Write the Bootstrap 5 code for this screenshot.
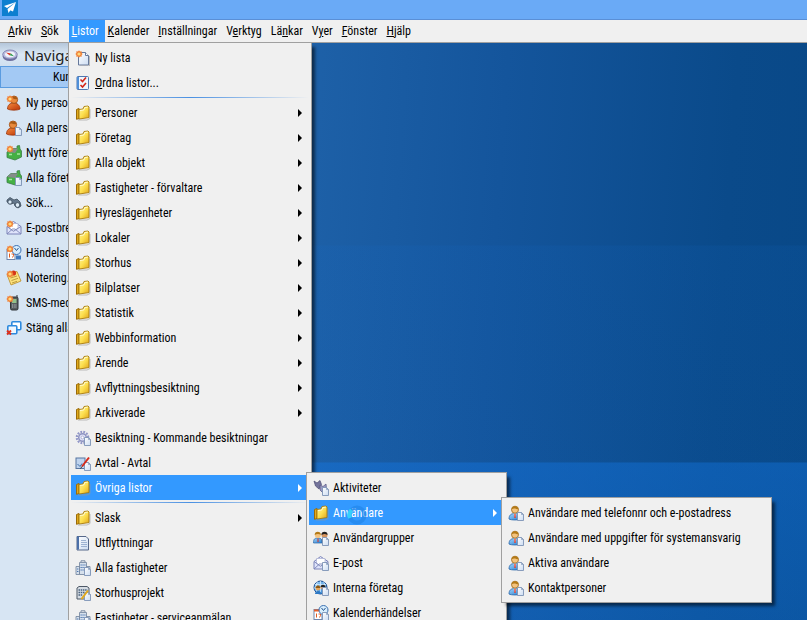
<!DOCTYPE html>
<html lang="sv">
<head>
<meta charset="utf-8">
<meta name="viewport" content="width=device-width, initial-scale=1">
<title>Listor</title>
<link href="https://cdn.jsdelivr.net/npm/bootstrap@5.3.0/dist/css/bootstrap.min.css" rel="stylesheet">
<style>
  body { font-family: "Roboto Condensed", Roboto, "Liberation Sans", sans-serif; font-size: 12px; line-height: 16px; color: #000; }
  .defs { position: absolute; width: 0; height: 0; }
  .ico { width: 16px; height: 16px; flex: none; }
  .title-strip { background: #6aaaf6; height: 20px; border-bottom: 1px solid #5a8fd6; padding-left: 2px; }
  .menu-strip { background: #f0f0f0; height: 23px; border-bottom: 1px solid #a0a0a0; padding-left: 5px; }
  .menu-strip .nav-link { color: #000; padding: 3px 6px 3px 3px; }
  .menu-strip .nav-link.active { background: #3399ff; color: #fff; }
  .side { width: 170px; background: #d7e5f3; }
  .side-head { height: 23px; font: 15px/24px "Noto Sans", sans-serif; color: #1e1e1e; background: linear-gradient(#b4c6da, #dbe8f5 50%, #cfdff0); padding-left: 2px; gap: 6px; }
  .side-tab { height: 22px; border: 1px solid #5a9be0; background: #a3c9f4; color: #000; padding: 2px 0 2px 52px; }
  .side-list { padding-top: 2px; }
  .side-link { height: 25px; color: #000; gap: 4px; padding-left: 6px; }
  .desk {
    background:
      linear-gradient(transparent 35%, rgba(20,110,210,.1) 35.2%, rgba(20,110,210,.06) 72.6%, rgba(20,120,230,.42) 72.8%, rgba(20,120,230,.3) 100%),
      linear-gradient(94deg, #1e61a8 20%, #14559c 50%, #0a4a8a 84%, #084887);
  }
  .pop { position: absolute; z-index: 5; background: #f0f0f0; border: 1px solid #a0a0a0; padding: 2px; box-shadow: 4px 4px 3px -1px rgba(0,0,0,.55); }
  .pop-main { top: 42px; left: 68px; width: 244px; }
  .pop-lists { top: -3px; left: calc(100% - 3px); width: 201px; }
  .pop-users { top: -3px; left: calc(100% - 3px); width: 271px; }
  .entry { height: 25px; width: 100%; color: #000; padding: 0 7px 0 4px; gap: 4px; border: 0; background: none; text-align: left; white-space: nowrap; }
  .entry.on { background: #3399ff; color: #fff; }
  .sub::after { content: ""; margin-left: auto; border: 4px solid transparent; border-left-color: currentColor; border-right: 0; }
  .rule { height: 5px; padding-top: 2px; }
  .rule hr { margin: 0; border: 0; height: 1px; opacity: 1; background: linear-gradient(90deg, #f0f0f0, #4a90e2 50%, #f0f0f0); }
  .busy { position: absolute; left: 38px; top: 5px; width: 20px; height: 20px; }
</style>
<script src="https://cdn.jsdelivr.net/npm/bootstrap@5.3.0/dist/js/bootstrap.bundle.min.js"></script>
</head>
<body class="vh-100 overflow-hidden d-flex flex-column position-relative">
<svg class="defs" aria-hidden="true">
  <defs>
    <linearGradient id="gold" x2="1" y2="1"><stop stop-color="#fff3a0"/><stop offset=".5" stop-color="#fde050"/><stop offset="1" stop-color="#e0a418"/></linearGradient>
    <linearGradient id="sheet" x2="1" y2="1"><stop stop-color="#fff"/><stop offset="1" stop-color="#ccdcf2"/></linearGradient>
    <linearGradient id="blue" x2="1" y2="1"><stop stop-color="#9fd4fb"/><stop offset="1" stop-color="#2a7fd0"/></linearGradient>
    <linearGradient id="rust" x2="1" y2="1"><stop stop-color="#f58a3c"/><stop offset="1" stop-color="#b93408"/></linearGradient>
    <symbol id="star" viewBox="0 0 16 16"><circle cx="4" cy="4" r="3" fill="#f28a3c"/><path d="M4 .5v7M.5 4h7M1.500 1.500l5 5M6.500 1.500l-5 5" stroke="#ef7a35" stroke-width=".8"/><circle cx="4" cy="4" r="1.600" fill="#ffd87a"/></symbol>
    <symbol id="page" viewBox="0 0 16 16"><path d="M9.500 7.500h4l2 2v6h-6z" fill="url(#sheet)" stroke="#7d93b5" stroke-width=".9"/><path d="M13.500 7.500v2h2" fill="none" stroke="#7d93b5" stroke-width=".7"/></symbol>
    <symbol id="folder" viewBox="0 0 16 16"><path d="M3 15h9l3-1.500V4" fill="none" stroke="#999" opacity=".6"/><path d="M1.500 4.500L4 3.500v10l-2.500.8z" fill="#e2a91c" stroke="#9a6b08"/><path d="M4 4.500l4-.5 1-2.500 4-.5 1 1v10.600L4 14z" fill="url(#gold)" stroke="#a87a0c" stroke-width=".9"/><path d="M5 5.500l3.800-.5 1-2.500 3-.4" fill="none" stroke="#fffbd0"/></symbol>
    <symbol id="new" viewBox="0 0 16 16"><path d="M3.500 2.500h7l3 3v9.500h-10z" fill="url(#sheet)" stroke="#66789a"/><path d="M10.500 2.500v3h3" fill="#fff" stroke="#66789a"/><path d="M14.500 6v10H5" fill="none" stroke="#999" opacity=".6"/><use href="#star"/></symbol>
    <symbol id="check" viewBox="0 0 16 16"><rect x="2" y="1.500" width="11.500" height="13" rx="1" fill="#eef5fd" stroke="#4f77b0"/><path d="M3 2v12" stroke="#4f8fd8" stroke-width="2"/><path d="M5.500 4.500l2 2 3.500-4M5.500 10l2 2L11 8" fill="none" stroke="#d32618" stroke-width="1.600"/></symbol>
    <symbol id="person" viewBox="0 0 16 16"><path d="M1.500 14c0-4 2.500-6 6-6s6.500 2 6.500 6c-2 1.500-10 1.500-12.500 0z" fill="url(#rust)" stroke="#9c3208" stroke-width=".8"/><circle cx="8" cy="4.700" r="3.700" fill="#e98a3d" stroke="#9c4a10" stroke-width=".8"/><path d="M5 3.500c1-3 6-2.500 6.300.8-2-.2-4 0-6.300-.8z" fill="#a85b15"/></symbol>
    <symbol id="nperson" viewBox="0 0 16 16"><use href="#person"/><use href="#star"/></symbol>
    <symbol id="aperson" viewBox="0 0 16 16"><use href="#person" x="-1"/><use href="#page"/></symbol>
    <symbol id="house" viewBox="0 0 16 16"><path d="M1 7l4-3.500h6V1l2.500-.5L14 4l1.500 2v6L9 15l-8-2.500z" fill="#45b044" stroke="#3b7e45" stroke-width=".8"/><path d="M1 7l4-3.500h7L9 8z" fill="#858c8a"/><path d="M3 9.500h3M11 9h3" stroke="#a5e5a0" stroke-width="1.500"/></symbol>
    <symbol id="nhouse" viewBox="0 0 16 16"><use href="#house"/><use href="#star"/></symbol>
    <symbol id="ahouse" viewBox="0 0 16 16"><use href="#house"/><use href="#page"/></symbol>
    <symbol id="bino" viewBox="0 0 16 16"><path d="M1 5l3-2.500L8 5l3-1 3 3 1 4-3 2-3-2-1-3-3 1-4-2z" fill="#66798d" stroke="#3e4c5c" stroke-width=".8"/><circle cx="4" cy="7" r="2.200" fill="#dcebf6" stroke="#405062"/><circle cx="11.500" cy="10" r="2.400" fill="#dcebf6" stroke="#405062"/></symbol>
    <symbol id="mail" viewBox="0 0 16 16"><path d="M1 6.500l6.500-5L15 6.500V14H1z" fill="#dfe4fb" stroke="#7c84b8"/><path d="M3.500 3.500h8.500v5l-4.500 3-4-3z" fill="#fff" stroke="#a8aed0" stroke-width=".7"/><path d="M1 14l5.500-5h2.500l6 5M1 6.500L7.500 11 15 6.500" fill="none" stroke="#7c84b8" stroke-width=".9"/></symbol>
    <symbol id="nmail" viewBox="0 0 16 16"><use href="#mail"/><use href="#star"/></symbol>
    <symbol id="amail" viewBox="0 0 16 16"><use href="#mail"/><use href="#page"/></symbol>
    <symbol id="cal" viewBox="0 0 16 16"><rect x="1" y="4.500" width="8" height="10" fill="#fff" stroke="#6f86ad"/><path d="M1 5.500h8" stroke="#e6602a" stroke-width="2"/><path d="M3.500 8.500v4M5.500 9h2v1.500l-1 2" fill="none" stroke="#e05b20"/><circle cx="10.500" cy="5" r="4.500" fill="#d7edfc" stroke="#3a6fb0"/><path d="M8.500 3l2 2.500 2-2.500" fill="none" stroke="#28558e"/><path d="M10 10.500h5v4h-5z" fill="#3c78be"/></symbol>
    <symbol id="ncal" viewBox="0 0 16 16"><use href="#cal"/><use href="#star"/></symbol>
    <symbol id="acal" viewBox="0 0 16 16"><use href="#cal"/><use href="#page"/></symbol>
    <symbol id="note" viewBox="0 0 16 16"><path d="M1 4.500l10-3L15 11 5 15z" fill="#fbe17c" stroke="#ba8a26" stroke-width=".8"/><path d="M4.500 8l6.500-2M5.500 10.500L12 8.300M6 13l5-1.700" stroke="#b08a2c" stroke-width=".8"/><circle cx="7.500" cy="3" r="2.600" fill="#d63417"/></symbol>
    <symbol id="nnote" viewBox="0 0 16 16"><use href="#note"/><use href="#star"/></symbol>
    <symbol id="phone" viewBox="0 0 16 16"><path d="M11 3V0" stroke="#333"/><rect x="4.500" y="2" width="7.500" height="13" rx="1.500" fill="#555b5e" stroke="#2e3336"/><rect x="6" y="4" width="4.500" height="4" fill="#90c08a"/><path d="M6 10h4.500M6 12h4.500" stroke="#b9c0c4" stroke-dasharray="1 .7"/><use href="#star"/></symbol>
    <symbol id="close" viewBox="0 0 16 16"><rect x="5.800" y="1.800" width="9" height="8" rx="1" fill="#fff" stroke="#2d8ade" stroke-width="1.600"/><rect x="1.800" y="5.800" width="9" height="8" rx="1" fill="#eef7ff" stroke="#2d8ade" stroke-width="1.600"/><path d="M1 10.500l4 4M5 10.500l-4 4" stroke="#e0321c" stroke-width="1.800"/></symbol>
    <symbol id="gear" viewBox="0 0 16 16"><circle cx="7.500" cy="7.500" r="5.700" fill="none" stroke="#9297c8" stroke-width="2.200" stroke-dasharray="1.800 1.200"/><circle cx="7.500" cy="7.500" r="3.800" fill="#dfe2f7" stroke="#8d92c0" stroke-width="1.500"/><circle cx="7.500" cy="7.500" r="1.400" fill="#fff" stroke="#8d92c0" stroke-width=".6"/><use href="#page"/></symbol>
    <symbol id="pen" viewBox="0 0 16 16"><rect x="1" y="3" width="9" height="10.500" fill="#bfd3ee" stroke="#57749f"/><path d="M2.500 9l2.500 2.500 2-3" fill="none" stroke="#3e6ea8"/><use href="#page"/><path d="M14 2.500l-7 9" stroke="#d62a1a" stroke-width="2"/><path d="M7 11.500l-1.500 2" stroke="#333"/></symbol>
    <symbol id="book" viewBox="0 0 16 16"><path d="M2 1.500h9l2.500 2.500v11H2z" fill="url(#sheet)" stroke="#56688a"/><path d="M3 1.500v13" stroke="#4b6fa8" stroke-width="2"/><path d="M6 5.500h5M6 7.500h6M6 9.500h6M6 11.500h6" stroke="#8ba3c8" stroke-width=".8"/></symbol>
    <symbol id="tower" viewBox="0 0 16 16"><path d="M4.500 2.500h7v12h-7zM1 6.500h3.500v8H1zM11.500 6.500H15v8h-3.500z" fill="#d6e0ec" stroke="#7a8ba3" stroke-width=".9"/><path d="M6 2V.8h4V2" fill="none" stroke="#7a8ba3"/><path d="M5.500 5h5M5.500 7.500h5M2 9h2M2 11.500h2M5.500 10h5" stroke="#4c76b2" stroke-width="1.200" stroke-dasharray="1.300 .6"/><use href="#page"/></symbol>
    <symbol id="proj" viewBox="0 0 16 16"><path d="M2 3l2-1.500h8L14 3v11H2z" fill="#d6dce3" stroke="#4d5866"/><path d="M3.500 5h9M3.500 7.500h6M3.500 10h4" stroke="#49617e" stroke-width="1.300" stroke-dasharray="1.500 .7"/><use href="#page"/><path d="M13 5.500L6.500 14" stroke="#e2a91c" stroke-width="2"/></symbol>
    <symbol id="act" viewBox="0 0 16 16"><path d="M1 1l3 2 3-2.500 1.500 4L6 9 2.500 6z" fill="#74749c" stroke="#4b4b72" stroke-width=".7"/><path d="M7 5l3 1.500L13 4l.5 5-3 4.500L7 10z" fill="#9a9ac2" stroke="#555580" stroke-width=".7"/><use href="#page"/></symbol>
    <symbol id="user" viewBox="0 0 16 16"><path d="M1 14c0-4 2-5.500 6-5.500s6 1.500 6 5.500c-2 1.300-10 1.300-12 0z" fill="url(#blue)" stroke="#2865a8" stroke-width=".8"/><path d="M5.500 8.500L7 13l1.500-4.500z" fill="#fff"/><path d="M7 9v4" stroke="#e02d1e" stroke-width="1.300"/><circle cx="7" cy="4.700" r="3.500" fill="#f4c37e" stroke="#99661a" stroke-width=".8"/><path d="M3.500 4.500C3.500 0 10.500 0 10.500 4.500 8 4 6 2.500 3.500 4.500z" fill="#b37a18"/><use href="#page"/></symbol>
    <symbol id="group" viewBox="0 0 16 16"><path d="M8 13c0-4 1-5 3.500-5S15 9.500 15 13z" fill="#77513c"/><circle cx="11.500" cy="5" r="3" fill="#d69560"/><path d="M8.500 5C8 .8 15 .8 14.500 5 12 3.500 11 3.500 8.500 5z" fill="#222"/><path d="M.5 13c0-4 1-5 4.500-5s4 1.500 4 5z" fill="url(#blue)" stroke="#2865a8" stroke-width=".7"/><path d="M5 8.500V12" stroke="#e02d1e"/><circle cx="4.800" cy="5" r="3" fill="#f4c37e"/><path d="M1.700 5C1.500.8 8 .8 7.800 5 6 3.500 4 3.500 1.700 5z" fill="#b37a18"/><use href="#page"/></symbol>
    <symbol id="globe" viewBox="0 0 16 16"><circle cx="7.500" cy="7.500" r="6.500" fill="url(#blue)" stroke="#1b4f94"/><path d="M2 4.500h11M1 8h13M7.500 1v13M4.500 1.500c-2 4-2 8 0 12M10.500 1.500c2 4 2 8 0 12" fill="none" stroke="#e4f3ff" stroke-width=".7"/><circle cx="5" cy="8" r="2.400" fill="#e7a75d"/><path d="M2.500 8C3 4.500 7 4.500 7.500 8z" fill="#8a5714"/><path d="M2 14c0-4 6-4 6.500 0z" fill="#2d78c4"/><circle cx="10" cy="7.500" r="2.200" fill="#d69560"/><path d="M7.500 7c.5-3 4.500-3 5 0z" fill="#222"/><use href="#page"/></symbol>
    <symbol id="compass" viewBox="0 0 16 16"><ellipse cx="8" cy="9.500" rx="7.300" ry="4.500" fill="#6d6f9e"/><ellipse cx="8" cy="7.500" rx="7.300" ry="4.500" fill="#b9bcdf" stroke="#7476a6" stroke-width=".8"/><ellipse cx="8" cy="7.300" rx="5" ry="2.900" fill="#f0f3fb"/><path d="M4 5.500l5 1-1.500 1.700z" fill="#d92c1d"/><path d="M12 9.200l-4.500-1L9 6.500z" fill="#2a9a48"/></symbol>
  </defs>
</svg>

<header class="title-strip d-flex align-items-start flex-shrink-0">
  <svg class="ico" viewBox="0 0 16 16" role="img" aria-label="Program"><path d="M0 0h16v16H0z" fill="#0d7fd0"/><path d="M14 2L2 6l3 2zM14 2L5.500 9l1 4zM14 2L7.500 10l3.500 1.500z" fill="#fff"/></svg>
</header>
<nav class="menu-strip nav flex-nowrap flex-shrink-0" aria-label="Huvudmeny">
  <a class="nav-link" href="#"><u>A</u>rkiv</a>
  <a class="nav-link me-1" href="#"><u>S</u>ök</a>
  <a class="nav-link active" href="#"><u>L</u>istor</a>
  <a class="nav-link" href="#"><u>K</u>alender</a>
  <a class="nav-link" href="#"><u>I</u>nställningar</a>
  <a class="nav-link" href="#">V<u>e</u>rktyg</a>
  <a class="nav-link" href="#">Lä<u>n</u>kar</a>
  <a class="nav-link" href="#">V<u>y</u>er</a>
  <a class="nav-link" href="#"><u>F</u>önster</a>
  <a class="nav-link" href="#"><u>H</u>jälp</a>
</nav>

<div class="d-flex flex-grow-1 overflow-hidden">
  <aside class="side flex-shrink-0 text-nowrap overflow-hidden">
    <div class="side-head d-flex"><svg class="ico mt-1"><use href="#compass"/></svg>Navigator</div>
    <button class="side-tab d-block w-100 text-start" type="button">Kund</button>
    <div class="side-list d-flex flex-column">
      <a class="side-link d-flex align-items-center text-decoration-none" href="#"><svg class="ico"><use href="#nperson"/></svg>Ny person...</a>
      <a class="side-link d-flex align-items-center text-decoration-none" href="#"><svg class="ico"><use href="#aperson"/></svg>Alla personer</a>
      <a class="side-link d-flex align-items-center text-decoration-none" href="#"><svg class="ico"><use href="#nhouse"/></svg>Nytt företag...</a>
      <a class="side-link d-flex align-items-center text-decoration-none" href="#"><svg class="ico"><use href="#ahouse"/></svg>Alla företag</a>
      <a class="side-link d-flex align-items-center text-decoration-none" href="#"><svg class="ico"><use href="#bino"/></svg>Sök...</a>
      <a class="side-link d-flex align-items-center text-decoration-none" href="#"><svg class="ico"><use href="#nmail"/></svg>E-postbrev...</a>
      <a class="side-link d-flex align-items-center text-decoration-none" href="#"><svg class="ico"><use href="#ncal"/></svg>Händelse...</a>
      <a class="side-link d-flex align-items-center text-decoration-none" href="#"><svg class="ico"><use href="#nnote"/></svg>Notering...</a>
      <a class="side-link d-flex align-items-center text-decoration-none" href="#"><svg class="ico"><use href="#phone"/></svg>SMS-meddelande</a>
      <a class="side-link d-flex align-items-center text-decoration-none" href="#"><svg class="ico"><use href="#close"/></svg>Stäng alla</a>
    </div>
  </aside>
  <main class="desk flex-grow-1"></main>
</div>

<ul class="pop pop-main list-unstyled m-0">
  <li><button class="entry d-flex align-items-center" type="button"><svg class="ico"><use href="#new"/></svg>Ny lista</button></li>
  <li><button class="entry d-flex align-items-center" type="button"><svg class="ico"><use href="#check"/></svg><span><u>O</u>rdna listor...</span></button></li>
  <li class="rule"><hr></li>
  <li><button class="entry sub d-flex align-items-center" type="button"><svg class="ico"><use href="#folder"/></svg>Personer</button></li>
  <li><button class="entry sub d-flex align-items-center" type="button"><svg class="ico"><use href="#folder"/></svg>Företag</button></li>
  <li><button class="entry sub d-flex align-items-center" type="button"><svg class="ico"><use href="#folder"/></svg>Alla objekt</button></li>
  <li><button class="entry sub d-flex align-items-center" type="button"><svg class="ico"><use href="#folder"/></svg>Fastigheter - förvaltare</button></li>
  <li><button class="entry sub d-flex align-items-center" type="button"><svg class="ico"><use href="#folder"/></svg>Hyreslägenheter</button></li>
  <li><button class="entry sub d-flex align-items-center" type="button"><svg class="ico"><use href="#folder"/></svg>Lokaler</button></li>
  <li><button class="entry sub d-flex align-items-center" type="button"><svg class="ico"><use href="#folder"/></svg>Storhus</button></li>
  <li><button class="entry sub d-flex align-items-center" type="button"><svg class="ico"><use href="#folder"/></svg>Bilplatser</button></li>
  <li><button class="entry sub d-flex align-items-center" type="button"><svg class="ico"><use href="#folder"/></svg>Statistik</button></li>
  <li><button class="entry sub d-flex align-items-center" type="button"><svg class="ico"><use href="#folder"/></svg>Webbinformation</button></li>
  <li><button class="entry sub d-flex align-items-center" type="button"><svg class="ico"><use href="#folder"/></svg>Ärende</button></li>
  <li><button class="entry sub d-flex align-items-center" type="button"><svg class="ico"><use href="#folder"/></svg>Avflyttningsbesiktning</button></li>
  <li><button class="entry sub d-flex align-items-center" type="button"><svg class="ico"><use href="#folder"/></svg>Arkiverade</button></li>
  <li><button class="entry d-flex align-items-center" type="button"><svg class="ico"><use href="#gear"/></svg>Besiktning - Kommande besiktningar</button></li>
  <li><button class="entry d-flex align-items-center" type="button"><svg class="ico"><use href="#pen"/></svg>Avtal - Avtal</button></li>
  <li class="position-relative">
    <button class="entry sub on d-flex align-items-center" type="button"><svg class="ico"><use href="#folder"/></svg>Övriga listor</button>
    <ul class="pop pop-lists list-unstyled m-0">
      <li><button class="entry d-flex align-items-center" type="button"><svg class="ico"><use href="#act"/></svg>Aktiviteter</button></li>
      <li class="position-relative">
        <button class="entry sub on d-flex align-items-center" type="button"><svg class="ico"><use href="#folder"/></svg>Användare</button>
        <svg class="busy" viewBox="0 0 20 20" aria-hidden="true"><circle cx="10" cy="10" r="7.500" fill="none" stroke="#1f84e6" stroke-width="4" opacity=".6"/><path d="M3 13A7.500 7.500 0 0 1 4.500 5" fill="none" stroke="#35d0fb" stroke-width="4"/></svg>
        <ul class="pop pop-users list-unstyled m-0">
          <li><button class="entry d-flex align-items-center" type="button"><svg class="ico"><use href="#user"/></svg>Användare med telefonnr och e-postadress</button></li>
          <li><button class="entry d-flex align-items-center" type="button"><svg class="ico"><use href="#user"/></svg>Användare med uppgifter för systemansvarig</button></li>
          <li><button class="entry d-flex align-items-center" type="button"><svg class="ico"><use href="#user"/></svg>Aktiva användare</button></li>
          <li><button class="entry d-flex align-items-center" type="button"><svg class="ico"><use href="#user"/></svg>Kontaktpersoner</button></li>
        </ul>
      </li>
      <li><button class="entry d-flex align-items-center" type="button"><svg class="ico"><use href="#group"/></svg>Användargrupper</button></li>
      <li><button class="entry d-flex align-items-center" type="button"><svg class="ico"><use href="#amail"/></svg>E-post</button></li>
      <li><button class="entry d-flex align-items-center" type="button"><svg class="ico"><use href="#globe"/></svg>Interna företag</button></li>
      <li><button class="entry d-flex align-items-center" type="button"><svg class="ico"><use href="#acal"/></svg>Kalenderhändelser</button></li>
    </ul>
  </li>
  <li class="rule"><hr></li>
  <li><button class="entry sub d-flex align-items-center" type="button"><svg class="ico"><use href="#folder"/></svg>Slask</button></li>
  <li><button class="entry d-flex align-items-center" type="button"><svg class="ico"><use href="#book"/></svg>Utflyttningar</button></li>
  <li><button class="entry d-flex align-items-center" type="button"><svg class="ico"><use href="#tower"/></svg>Alla fastigheter</button></li>
  <li><button class="entry d-flex align-items-center" type="button"><svg class="ico"><use href="#proj"/></svg>Storhusprojekt</button></li>
  <li><button class="entry d-flex align-items-center" type="button"><svg class="ico"><use href="#tower"/></svg>Fastigheter - serviceanmälan</button></li>
</ul>
</body>
</html>
